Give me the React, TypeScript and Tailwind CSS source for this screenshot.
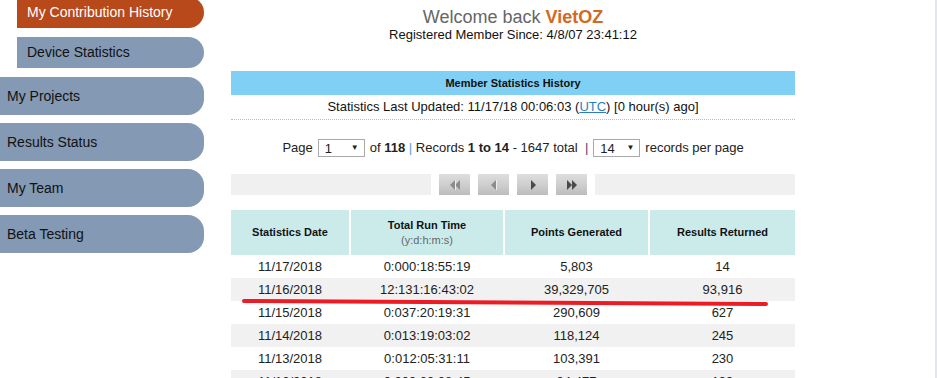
import React from "react";

const rows = [
  ["11/17/2018", "0:000:18:55:19", "5,803", "14"],
  ["11/16/2018", "12:131:16:43:02", "39,329,705", "93,916"],
  ["11/15/2018", "0:037:20:19:31", "290,609", "627"],
  ["11/14/2018", "0:013:19:03:02", "118,124", "245"],
  ["11/13/2018", "0:012:05:31:11", "103,391", "230"],
  ["11/12/2018", "0:009:23:28:45", "94,477", "199"],
];

const cols = "grid grid-cols-[118px_152px_143px_145px] gap-x-[2px]";

function FakeSelect({ value }: { value: string }) {
  return (
    <div className="flex items-center justify-between w-[47px] h-[18px] border border-[#a9a9a9] bg-white pl-[6px] pr-[5px] text-[13px] leading-none">
      <span>{value}</span>
      <span className="text-[8px] text-[#222]">▼</span>
    </div>
  );
}

function NavButton({ kind, dim }: { kind: "first" | "prev" | "next" | "last"; dim?: boolean }) {
  const fill = dim ? "#8c8c8c" : "#4a4a4a";
  return (
    <div className="w-[31px] h-[21px] flex items-center justify-center bg-gradient-to-b from-[#dedede] via-[#cfcfcf] to-[#bcbcbc]">
      <svg width="16" height="12" viewBox="0 0 16 12">
        {kind === "first" && (
          <>
            <path d="M8 1 L3 6 L8 11 Z" fill={fill} />
            <path d="M13 1 L8 6 L13 11 Z" fill={fill} />
            <rect x="8" y="1" width="1" height="10" fill="#eee" />
          </>
        )}
        {kind === "prev" && (
          <>
            <path d="M10 1 L5 6 L10 11 Z" fill={fill} />
            <rect x="10" y="1" width="1" height="10" fill="#eee" />
          </>
        )}
        {kind === "next" && <path d="M6 1 L11 6 L6 11 Z" fill={fill} />}
        {kind === "last" && (
          <>
            <path d="M3 1 L8 6 L3 11 Z" fill={fill} />
            <path d="M8 1 L13 6 L8 11 Z" fill={fill} />
          </>
        )}
      </svg>
    </div>
  );
}

export default function App() {
  return (
    <div
      className="relative flex items-start w-[937px] h-[378px] overflow-hidden bg-white text-[#111] border-r-2 border-[#e3e6ea]"
      style={{ fontFamily: '"Liberation Sans", Arial, sans-serif' }}
    >
      {/* sidebar */}
      <nav className="w-[204px] shrink-0 flex flex-col text-[14px] -mt-[3px]">
        <div className="ml-[17px] h-[31px] flex items-center pl-[10px] bg-[#b8491b] text-white rounded-r-[16px]">
          My Contribution History
        </div>
        <div className="ml-[17px] mt-[9px] h-[31px] flex items-center pl-[10px] bg-[#8399b4] rounded-r-[16px]">
          Device Statistics
        </div>
        {["My Projects", "Results Status", "My Team", "Beta Testing"].map((label, i) => (
          <div
            key={label}
            className={`${i === 0 ? "mt-[9px]" : "mt-[8px]"} h-[38px] flex items-center pl-[7px] bg-[#8399b4] rounded-r-[16px]`}
          >
            {label}
          </div>
        ))}
      </nav>

      {/* main */}
      <main className="ml-[27px] w-[564px] shrink-0">
        <div className="pt-[7px] text-center">
          <p className="text-[18px] leading-[20px] text-[#666]">
            Welcome back <b className="text-[#d2691e]">VietOZ</b>
          </p>
          <p className="text-[13px] leading-[16px]">Registered Member Since: 4/8/07 23:41:12</p>
        </div>

        <div className="mt-[28px] h-[24px] flex items-center justify-center bg-[#80cff4] text-[11px] font-bold">
          Member Statistics History
        </div>
        <div className="h-[25px] flex items-center justify-center text-[13px] border-b border-dotted border-[#bbb]">
          Statistics Last Updated: 11/17/18 00:06:03 (<span className="text-[#2a7fc0] underline">UTC</span>) [0 hour(s) ago]
        </div>

        <div className="mt-[19px] h-[18px] flex items-center justify-center gap-[5px] text-[13px] text-[#222]">
          <span>Page</span>
          <FakeSelect value="1" />
          <span>
            of <b>118</b> <span className="text-[#5b9bd5]">|</span> Records <b>1 to 14</b> - 1647 total{" "}
            <span className="text-[#5a3a6a]">&nbsp;|</span>
          </span>
          <FakeSelect value="14" />
          <span>records per page</span>
        </div>

        <div className="mt-[17px] h-[21px] flex gap-[8px]">
          <div className="flex-1 bg-[#f0f0f0]" />
          <NavButton kind="first" dim />
          <NavButton kind="prev" dim />
          <NavButton kind="next" />
          <NavButton kind="last" />
          <div className="flex-1 bg-[#f0f0f0]" />
        </div>

        <div className="mt-[15px]">
          <div className={`${cols} h-[45px] text-[11px] font-bold`}>
            <div className="bg-[#cbebea] flex items-center justify-center">Statistics Date</div>
            <div className="bg-[#cbebea] flex flex-col items-center justify-center leading-[15px]">
              <span>Total Run Time</span>
              <span className="font-normal text-[11px] text-[#666]">(y:d:h:m:s)</span>
            </div>
            <div className="bg-[#cbebea] flex items-center justify-center">Points Generated</div>
            <div className="bg-[#cbebea] flex items-center justify-center">Results Returned</div>
          </div>
          {rows.map((r, i) => (
            <div
              key={r[0]}
              className={`${cols} h-[23px] items-center text-[13px] text-[#222] ${i % 2 === 1 ? "bg-[#f0f1f0]" : ""}`}
            >
              {r.map((c, j) => (
                <div key={j} className="text-center">
                  {c}
                </div>
              ))}
            </div>
          ))}
        </div>
      </main>

      {/* hand-drawn highlight */}
      <svg className="absolute left-[241px] top-[297px]" width="528" height="10" viewBox="0 0 528 10">
        <path d="M3 4 Q 260 6 525 7" stroke="#ed1c24" strokeWidth="4" strokeLinecap="round" fill="none" />
      </svg>
    </div>
  );
}
